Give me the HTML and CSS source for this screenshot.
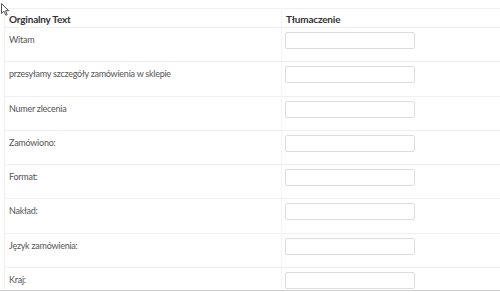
FILE: index.html
```html
<!DOCTYPE html>
<html lang="pl">
<head>
    <meta charset="UTF-8">
    <title>Tłumaczenia</title>
    <link rel="stylesheet" href="styles.css">
</head>
<body>

<div class="page">
    <table class="translations">
        <thead>
            <tr>
                <th class="col-orig">Orginalny Text</th>
                <th class="col-trans">Tłumaczenie</th>
            </tr>
        </thead>
        <tbody>
            <tr><td>Witam</td><td><input type="text"></td></tr>
            <tr><td>przesyłamy szczegóły zamówienia w sklepie</td><td><input type="text"></td></tr>
            <tr><td>Numer zlecenia</td><td><input type="text"></td></tr>
            <tr><td>Zamówiono:</td><td><input type="text"></td></tr>
            <tr><td>Format:</td><td><input type="text"></td></tr>
            <tr><td>Nakład:</td><td><input type="text"></td></tr>
            <tr><td>Język zamówienia:</td><td><input type="text"></td></tr>
            <tr><td>Kraj:</td><td><input type="text"></td></tr>
        </tbody>
    </table>
</div>

<div class="footer-line"></div>

<!-- mouse pointer left over the page -->
<svg class="cursor" width="9" height="13" viewBox="0 0 9 13">
    <path d="M0.5 0.5 L0.5 10.5 L3 8.2 L4.8 12.2 L6.2 11.6 L4.5 7.7 L7.8 7.7 Z" fill="#fff" stroke="#555" stroke-width="1"/>
</svg>

</body>
</html>
```

FILE: styles.css
```css
body {
    margin: 0;
    font-family: Lato, "Open Sans", sans-serif;
    background-color: #ffffff;
    color: #555;
    overflow: hidden;
    height: 292px;
    position: relative;
}
.page {
    padding: 8px 0 0 4px;
    height: 282px;
    overflow: hidden;
}
.translations {
    border-collapse: collapse;
    width: 560px;
    border-left: 1px solid #f0f0f0;
    border-top: 1px solid #f0f0f0;
    font-size: 9px;
}
.translations th {
    text-align: left;
    font-weight: bold;
    font-size: 10px;
    letter-spacing: -0.2px;
    color: #333;
    height: 19px;
    padding: 1px 4px 0 4px;
    border-bottom: 1px solid #f0f0f0;
    box-sizing: border-box;
}
.col-orig {
    width: 277px;
}
.col-trans {
    border-left: 1px solid #f5f5f5;
}
.translations td {
    height: 34.29px;
    padding: 4px 3px 0 3px;
    vertical-align: top;
    border-bottom: 1px solid #f0f0f0;
    box-sizing: border-box;
}
.translations td:first-child {
    padding-top: 6px;
    padding-left: 4px;
    letter-spacing: -0.25px;
}
.translations td + td {
    border-left: 1px solid #f5f5f5;
}
input {
    width: 130px;
    height: 17px;
    box-sizing: border-box;
    border: 1px solid #ddd;
    border-radius: 2px;
    margin: 0;
}
.footer-line {
    height: 0;
    border-top: 1px solid #cfcfcf;
}
.cursor {
    position: absolute;
    left: 1px;
    top: 3px;
}
```
